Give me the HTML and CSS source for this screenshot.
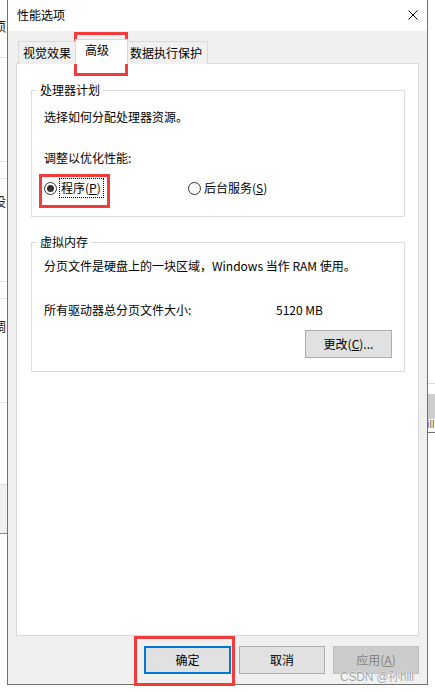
FILE: index.html
```html
<!DOCTYPE html>
<html lang="zh-CN">
<head>
<meta charset="utf-8">
<title>性能选项</title>
<link rel="stylesheet" href="styles.css">
</head>
<body>
<div class="desk">
  <span class="frag frag-1">须</span>
  <span class="frag frag-2">设</span>
  <span class="frag frag-3">调</span>
  <i class="hline l-57"></i>
  <i class="hline l-161"></i>
  <i class="hline l-178"></i>
  <i class="hline l-281"></i>
  <i class="hline l-298"></i>
  <i class="hline l-402"></i>
  <i class="lblock"></i>
  <i class="rline"></i>
  <i class="rblock"></i>
  <span class="rtext">ill</span>
  <i class="rdark"></i>

  <div class="window">
    <div class="titlebar">
      <span class="title">性能选项</span>
      <svg class="close" width="10" height="10" viewBox="0 0 10 10"><path d="M0.5 0.5 L9.5 9.5 M9.5 0.5 L0.5 9.5" stroke="#000" stroke-width="1" fill="none"/></svg>
    </div>
    <div class="client">
      <div class="tabs">
        <div class="tab">视觉效果</div>
        <div class="tab tab-active">高级</div>
        <div class="tab">数据执行保护</div>
      </div>
      <div class="panel">
        <fieldset class="group group-cpu">
          <legend>处理器计划</legend>
          <p class="line first">选择如何分配处理器资源。</p>
          <p class="line adjust">调整以优化性能:</p>
          <div class="radios">
            <label class="radio"><span class="dot checked"></span><span class="rlabel focus">程序(<u>P</u>)</span></label>
            <label class="radio"><span class="dot"></span><span class="rlabel">后台服务(<u>S</u>)</span></label>
          </div>
        </fieldset>
        <fieldset class="group group-vm">
          <legend>虚拟内存</legend>
          <p class="line first2">分页文件是硬盘上的一块区域，Windows 当作 RAM 使用。</p>
          <div class="sizerow"><span class="sizelabel">所有驱动器总分页文件大小:</span><span>5120 MB</span></div>
          <div class="changerow"><button class="btn change">更改(<u>C</u>)...</button></div>
        </fieldset>
      </div>
      <div class="footer">
        <button class="btn ok">确定</button>
        <button class="btn cancel">取消</button>
        <button class="btn apply" disabled>应用(<u>A</u>)</button>
      </div>
    </div>
    <span class="watermark">CSDN @孙hill</span>
  </div>

  <i class="mark mark-tab"></i>
  <i class="mark mark-radio"></i>
  <i class="mark mark-ok"></i>
</div>
</body>
</html>
```

FILE: styles.css
```css
* { box-sizing: border-box; }
html, body { margin: 0; padding: 0; }
body {
  width: 435px;
  height: 692px;
  background: #ffffff;
  font-family: "Noto Sans CJK SC", "Noto Sans", sans-serif;
  font-size: 12px;
  color: #000;
  overflow: hidden;
}
.desk { position: relative; width: 435px; height: 692px; }

/* background fragments behind the dialog */
.frag { position: absolute; left: -7px; font-size: 13px; line-height: 14px; color: #222; }
.frag-1 { top: 19px; }
.frag-2 { top: 194px; }
.frag-3 { top: 319px; }
.hline { position: absolute; left: 0; width: 8px; height: 1px; background: #e2e2e2; }
.l-57 { top: 57px; }
.l-161 { top: 161px; }
.l-178 { top: 178px; }
.l-281 { top: 281px; }
.l-298 { top: 298px; }
.l-402 { top: 402px; }
.lblock { position: absolute; left: 0; top: 484px; width: 8px; height: 50px; background: #f0f0f0; border-top: 1px solid #dcdcdc; border-bottom: 1px solid #8a8a8a; }
.rline { position: absolute; left: 428px; top: 383px; width: 7px; height: 1px; background: #dadada; }
.rblock { position: absolute; left: 428px; top: 394px; width: 7px; height: 25px; background: #cdcdcd; }
.rtext { position: absolute; left: 427px; top: 418px; font-family: "Liberation Sans", sans-serif; font-size: 11px; line-height: 12px; color: #666; }
.rdark { position: absolute; left: 428px; top: 432px; width: 7px; height: 1px; background: #707070; }

/* dialog window */
.window {
  position: absolute;
  left: 7px;
  top: 0;
  width: 421px;
  height: 685px;
  border: 1px solid #707070;
  border-top: none;
  background: #f0f0f0;
  display: flex;
  flex-direction: column;
}
.titlebar {
  height: 31px;
  background: #fff;
  display: flex;
  align-items: center;
  justify-content: space-between;
  padding: 0 9px 0 9px;
  flex: none;
}
.title { line-height: 16px; margin-top: -1px; }
.close { display: block; margin-top: -2px; }

.client {
  flex: 1;
  display: flex;
  flex-direction: column;
  padding: 9px 8px 10px 8px;
}
.tabs {
  display: flex;
  align-items: flex-end;
  margin-left: 2px;
  height: 24px;
  position: relative;
  z-index: 2;
  margin-bottom: -1px;
}
.tab {
  height: 23px;
  border: 1px solid #d9d9d9;
  border-bottom: none;
  background: #f0f0f0;
  padding: 0 5px 0 4px;
  line-height: 21px;
  white-space: nowrap;
  margin-left: -1px;
}
.tab:first-child { margin-left: 0; }
.tab-active {
  height: 25px;
  width: 53px;
  background: #fff;
  padding: 0 0 0 9px;
  line-height: 20px;
  margin-left: -2px;
  margin-right: -2px;
  margin-bottom: 0;
  position: relative;
  z-index: 3;
}

.panel {
  flex: 1;
  background: #fff;
  border: 1px solid #d9d9d9;
  padding: 18px 13px 0 14px;
  display: flex;
  flex-direction: column;
}
.group {
  margin: 0;
  border: 1px solid #dcdcdc;
  padding: 0 12px 0 12px;
  min-width: 0;
}
.group legend {
  padding: 0 3px;
  margin-left: -7px;
  line-height: 16px;
}
.line { margin: 0; line-height: 16px; white-space: nowrap; }
.group-cpu { padding-top: 11px; padding-bottom: 20px; }
.adjust { margin-top: 25px; }
.radios { display: flex; margin-top: 14px; height: 16px; align-items: center; }
.radio { display: flex; align-items: center; width: 144px; }
.dot {
  width: 13px; height: 13px;
  border: 1px solid #333;
  border-radius: 50%;
  display: flex; align-items: center; justify-content: center;
  flex: none;
}
.dot.checked::after {
  content: "";
  width: 7px; height: 7px;
  border-radius: 50%;
  background: #333;
}
.rlabel { margin-left: 3px; line-height: 16px; white-space: nowrap; padding: 1px 1px; }
.rlabel.focus { outline: 1px dotted #000; outline-offset: 0; padding: 1px 2px 1px 1px; }
.radio + .radio .rlabel { margin-left: 2px; }

.group-vm { margin-top: 17px; padding-top: 8px; padding-bottom: 13px; }
.sizerow { display: flex; margin-top: 28px; line-height: 16px; white-space: nowrap; }
.sizelabel { width: 232px; }
.changerow { display: flex; justify-content: flex-end; margin-top: 12px; }

.btn {
  font-family: "Noto Sans CJK SC", "Noto Sans", sans-serif;
  font-size: 12px;
  color: #000;
  background: #e1e1e1;
  border: 1px solid #adadad;
  height: 28px;
  padding: 0;
  line-height: 16px;
}
.change { width: 87px; }
.footer {
  display: flex;
  justify-content: flex-end;
  gap: 8px;
  margin-top: 10px;
  flex: none;
}
.ok { width: 87px; border: 2px solid #0078d7; }
.cancel { width: 86px; }
.apply { width: 86px; background: #cccccc; border-color: #bfbfbf; color: #838383; }

.watermark {
  position: absolute;
  right: 13px;
  bottom: 1px;
  font-family: "Liberation Sans", "Noto Sans CJK SC", sans-serif;
  font-size: 12px;
  letter-spacing: -0.2px;
  line-height: 12px;
  color: rgba(150,150,150,0.9);
  text-shadow: 0 0 1px #fff, 0 0 1px #fff;
}

/* red annotation boxes */
.mark { position: absolute; border: 3px solid #f23c3c; }
.mark-tab { left: 74px; top: 32px; width: 54px; height: 44px; }
.mark-radio { left: 39px; top: 174px; width: 71px; height: 34px; }
.mark-ok { left: 134px; top: 636px; width: 101px; height: 50px; }
```
